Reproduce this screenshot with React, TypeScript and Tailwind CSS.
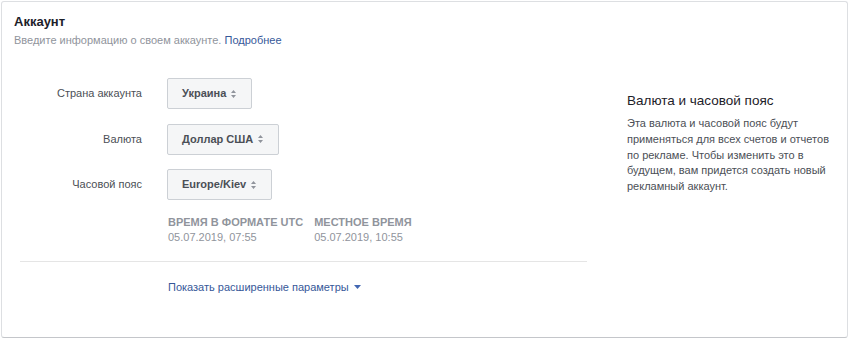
function Select({ value }: { value: string }) {
  return (
    <button className="flex h-[31px] items-center gap-[5px] rounded-[2px] border border-[#ccd0d5] bg-[#f5f6f7] pl-[14px] pr-[15px] text-[11px] font-bold text-[#4b4f56]">
      <span>{value}</span>
      <svg width="5" height="8" viewBox="0 0 5 8" className="text-[#90949c]">
        <path d="M2.5 0L5 3H0z M2.5 8L0 5h5z" fill="currentColor" />
      </svg>
    </button>
  );
}

function Row({ label, value }: { label: string; value: string }) {
  return (
    <div className="flex items-center">
      <div className="w-[122px] text-right text-[11px] text-[#4b4f56]">{label}</div>
      <div className="pl-[25px]">
        <Select value={value} />
      </div>
    </div>
  );
}

export default function App() {
  return (
    <div className="h-[340px] w-[849px] bg-white p-px font-['Liberation_Sans',Arial,sans-serif]">
      <div className="flex h-[337px] w-[847px] flex-col rounded-[3px] border border-[#dddfe2] border-b-[#c4c6ca] bg-white">
        <div className="px-[12px] pt-[12px]">
          <div className="text-[13px] font-bold leading-[16px] text-[#1d2129]">Аккаунт</div>
          <div className="mt-[3px] text-[11px] leading-[14px] text-[#90949c]">
            Введите информацию о своем аккаунте. <span className="text-[#365899]">Подробнее</span>
          </div>
        </div>
        <div className="flex pt-[31px]">
          <div className="ml-[18px] w-[567px]">
            <div className="flex flex-col gap-[14.5px]">
              <Row label="Страна аккаунта" value="Украина" />
              <Row label="Валюта" value="Доллар США" />
              <Row label="Часовой пояс" value="Europe/Kiev" />
            </div>
            <div className="ml-[148px] mt-[15px] flex gap-[11px] text-[11px] leading-[15px] text-[#90949c]">
              <div>
                <div className="font-bold uppercase">Время в формате UTC</div>
                <div>05.07.2019, 07:55</div>
              </div>
              <div>
                <div className="font-bold uppercase">Местное время</div>
                <div>05.07.2019, 10:55</div>
              </div>
            </div>
            <div className="mt-[16px] h-px bg-[#e5e5e5]" />
            <div className="ml-[148px] mt-[18px] flex items-center gap-[5px] text-[11px] leading-[14px] text-[#365899]">
              <span>Показать расширенные параметры</span>
              <svg width="7" height="4" viewBox="0 0 7 4">
                <path d="M0 0h7L3.5 4z" fill="#4267b2" />
              </svg>
            </div>
          </div>
          <div className="ml-[40px] w-[206px] pt-[15px]">
            <div className="text-[13.5px] leading-[16px] text-[#1d2129]">Валюта и часовой пояс</div>
            <p className="mt-[7px] text-[11px] leading-[15.8px] text-[#4b4f56]">
              Эта валюта и часовой пояс будут применяться для всех счетов и отчетов по рекламе. Чтобы изменить это в будущем, вам придется создать новый рекламный аккаунт.
            </p>
          </div>
        </div>
      </div>
    </div>
  );
}
